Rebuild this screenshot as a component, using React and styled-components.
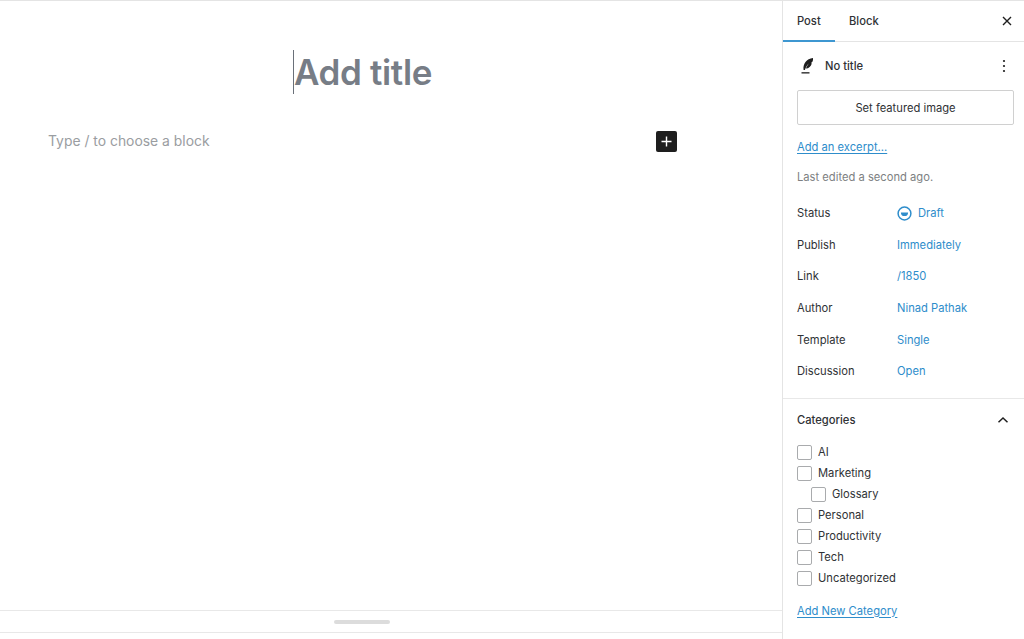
import React from "react";
import styled, { createGlobalStyle } from "styled-components";

const GlobalStyle = createGlobalStyle`
  html, body {
    margin: 0;
    padding: 0;
    background: #fff;
    font-family: Inter, "Liberation Sans", sans-serif;
  }
`;

const Page = styled.div`
  width: 1024px;
  height: 639px;
  display: flex;
  overflow: hidden;
  border-top: 1px solid #e4e4e4;
  box-sizing: border-box;
`;

const Main = styled.main`
  width: 782px;
  height: 100%;
  display: flex;
  flex-direction: column;
`;

const Canvas = styled.div`
  height: 609px;
  box-sizing: border-box;
  padding: 49px 0 0 48px;
`;

const Column = styled.div`
  width: 630px;
`;

const TitleRow = styled.div`
  height: 45px;
  display: flex;
  justify-content: center;
`;

const Title = styled.h1`
  position: relative;
  margin: 0;
  font-size: 35px;
  line-height: 45px;
  font-weight: 600;
  letter-spacing: -0.35px;
  color: #777d86;
`;

const Caret = styled.span`
  position: absolute;
  left: -1px;
  top: 0;
  width: 1px;
  height: 44px;
  background: #6a7079;
`;

const BlockRow = styled.div`
  margin-top: 35px;
  height: 22px;
  display: flex;
  align-items: center;
  justify-content: space-between;
`;

const Placeholder = styled.span`
  font-size: 13.9px;
  color: #9a9da1;
`;

const AddBlock = styled.div`
  width: 21px;
  height: 21px;
  margin-right: 1px;
  background: #1e1e1e;
  border-radius: 2px;
  display: flex;
  align-items: center;
  justify-content: center;
`;

const ResizeBar = styled.div`
  height: 21px;
  border-top: 1px solid #e8e8e8;
  border-bottom: 1px solid #e8e8e8;
  display: flex;
  align-items: center;
  padding-left: 334px;
`;

const Handle = styled.div`
  width: 56px;
  height: 4px;
  border-radius: 2px;
  background: #dcdcdc;
`;

const Sidebar = styled.aside`
  width: 242px;
  height: 100%;
  box-sizing: border-box;
  border-left: 1px solid #e4e4e4;
  color: #2f3235;
  font-size: 11.2px;
`;

const Tabs = styled.div`
  height: 40px;
  display: flex;
  align-items: stretch;
  border-bottom: 1px solid #e4e4e4;
`;

const Tab = styled.div`
  width: ${(p) => p.$width}px;
  display: flex;
  align-items: center;
  padding-left: ${(p) => p.$pad}px;
  box-sizing: border-box;
  font-weight: 500;
  margin-bottom: -1px;
  border-bottom: 2px solid ${(p) => (p.$active ? "#3e97d1" : "transparent")};
`;

const CloseBtn = styled.div`
  margin-left: auto;
  width: 34px;
  display: flex;
  align-items: center;
  justify-content: center;
`;

const PostHead = styled.div`
  height: 47px;
  display: flex;
  align-items: center;
  padding: 0 18px 0 17px;
  font-weight: 500;
  gap: 10px;
`;

const MoreBtn = styled.div`
  margin-left: auto;
  display: flex;
`;

const FeaturedBtn = styled.div`
  margin: 1px 9px 0 14px;
  width: 217px;
  height: 35px;
  box-sizing: border-box;
  border: 1px solid #d0d0d0;
  border-radius: 2px;
  display: flex;
  align-items: center;
  justify-content: center;
`;

const TextLink = styled.a`
  display: block;
  margin-left: 14px;
  margin-top: ${(p) => p.$top}px;
  color: #2e8dcb;
  text-decoration: underline;
  text-underline-offset: 2px;
`;

const Edited = styled.div`
  margin: 16px 0 0 14px;
  color: #7d7f82;
  line-height: 14px;
`;

const Rows = styled.div`
  margin-top: 13.4px;
  padding: 0 0 10.6px 14px;
  border-bottom: 1px solid #e8e8e8;
`;

const Row = styled.div`
  height: 31.6px;
  display: flex;
  align-items: center;
`;

const RowLabel = styled.span`
  width: 100px;
`;

const RowValue = styled.span`
  color: #2e8dcb;
  display: flex;
  align-items: center;
  gap: 6px;
`;

const CategoriesHead = styled.div`
  height: 42px;
  display: flex;
  align-items: center;
  justify-content: space-between;
  padding: 0 15px 0 14px;
  font-weight: 500;
`;

const CategoryList = styled.div`
  margin-top: 1px;
  padding-left: 14px;
`;

const Category = styled.label`
  height: 21px;
  display: flex;
  align-items: center;
  gap: 6px;
  padding-left: ${(p) => (p.$child ? 14 : 0)}px;
`;

const Box = styled.span`
  width: 15px;
  height: 15px;
  box-sizing: border-box;
  border: 1px solid #a9abad;
  border-radius: 2px;
  background: #fff;
`;

const rows = [
  ["Status", "Draft"],
  ["Publish", "Immediately"],
  ["Link", "/1850"],
  ["Author", "Ninad Pathak"],
  ["Template", "Single"],
  ["Discussion", "Open"],
];

const categories = [
  { name: "AI" },
  { name: "Marketing" },
  { name: "Glossary", child: true },
  { name: "Personal" },
  { name: "Productivity" },
  { name: "Tech" },
  { name: "Uncategorized" },
];

const DraftIcon = () => (
  <svg width="15" height="15" viewBox="0 0 15 15">
    <circle cx="7.5" cy="7.5" r="6.4" fill="none" stroke="#2e8dcb" strokeWidth="1.5" />
    <path d="M3.9 6.4h7.2a3.6 3.6 0 0 1-7.2 0z" fill="#2e8dcb" />
  </svg>
);

const FeatherIcon = () => (
  <svg width="15" height="18" viewBox="0 0 15 18">
    <path d="M3.6 13C2.6 7 6.6 1.8 13 1c.3 2.6-.5 4.2-2 5l.8.4c-.9 2.6-2.8 5-6 5.2 .8-2 1.8-3.7 3-5.2-1.7 1.6-3 3.6-3.9 6.6z" fill="#1e1e1e" />
    <rect x="1.5" y="15.2" width="8" height="1.3" fill="#1e1e1e" />
  </svg>
);

const App = () => {
  return (
    <Page>
      <GlobalStyle />
      <Main>
        <Canvas>
          <Column>
            <TitleRow>
              <Title>
                <Caret />
                Add title
              </Title>
            </TitleRow>
            <BlockRow>
              <Placeholder>Type / to choose a block</Placeholder>
              <AddBlock>
                <svg width="13" height="13" viewBox="0 0 13 13">
                  <path d="M5.8 1.5h1.4v4.3h4.3v1.4H7.2v4.3H5.8V7.2H1.5V5.8h4.3z" fill="#fff" />
                </svg>
              </AddBlock>
            </BlockRow>
          </Column>
        </Canvas>
        <ResizeBar>
          <Handle />
        </ResizeBar>
      </Main>
      <Sidebar>
        <Tabs>
          <Tab $active $width={52} $pad={14}>Post</Tab>
          <Tab $width={60} $pad={14}>Block</Tab>
          <CloseBtn>
            <svg width="12" height="12" viewBox="0 0 12 12">
              <path d="M2 2l8 8M10 2l-8 8" stroke="#1e1e1e" strokeWidth="1.4" fill="none" />
            </svg>
          </CloseBtn>
        </Tabs>
        <PostHead>
          <FeatherIcon />
          <span>No title</span>
          <MoreBtn>
            <svg width="4" height="14" viewBox="0 0 4 14">
              <circle cx="2" cy="2" r="1.1" fill="#1e1e1e" />
              <circle cx="2" cy="7" r="1.1" fill="#1e1e1e" />
              <circle cx="2" cy="12" r="1.1" fill="#1e1e1e" />
            </svg>
          </MoreBtn>
        </PostHead>
        <FeaturedBtn>Set featured image</FeaturedBtn>
        <TextLink $top={15}>Add an excerpt...</TextLink>
        <Edited>Last edited a second ago.</Edited>
        <Rows>
          {rows.map(([label, value]) => (
            <Row key={label}>
              <RowLabel>{label}</RowLabel>
              <RowValue>
                {label === "Status" && <DraftIcon />}
                {value}
              </RowValue>
            </Row>
          ))}
        </Rows>
        <CategoriesHead>
          <span>Categories</span>
          <svg width="12" height="8" viewBox="0 0 12 8">
            <path d="M1.5 6.2L6 2l4.5 4.2" stroke="#1e1e1e" strokeWidth="1.5" fill="none" />
          </svg>
        </CategoriesHead>
        <CategoryList>
          {categories.map((c) => (
            <Category key={c.name} $child={c.child}>
              <Box />
              {c.name}
            </Category>
          ))}
        </CategoryList>
        <TextLink $top={15}>Add New Category</TextLink>
      </Sidebar>
    </Page>
  );
};

export default App;
